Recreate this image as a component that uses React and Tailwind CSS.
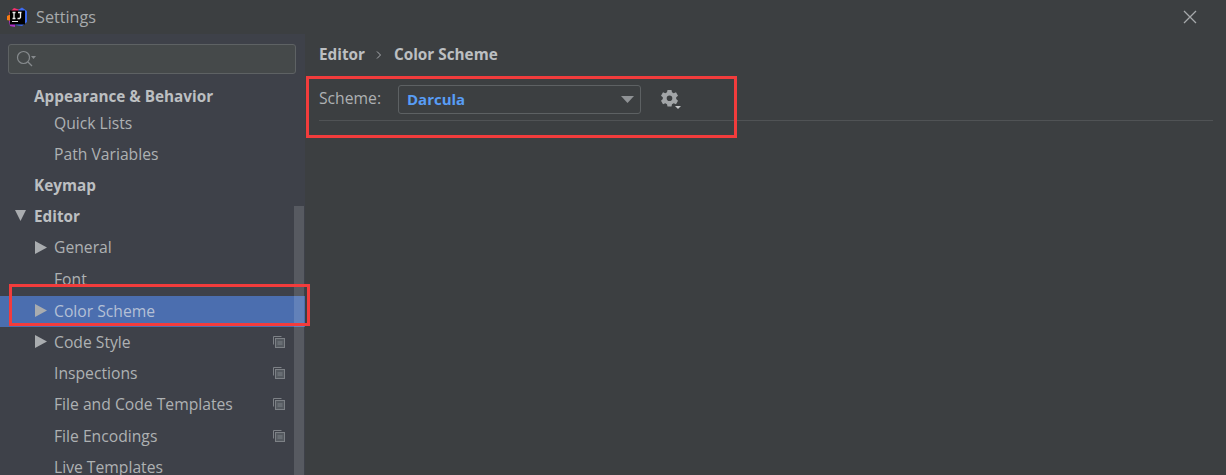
import React from "react";

const font = { fontFamily: '"Open Sans", "Noto Sans", sans-serif' };

function Tri({ down }) {
  return (
    <svg width="12" height="13" viewBox="0 0 12 13" className="shrink-0">
      {down ? <polygon points="0,1 11,1 5.5,12" fill="#a9acaf" /> : <polygon points="0,0 12,6.5 0,13" fill="#a9acaf" />}
    </svg>
  );
}

function Copy() {
  return (
    <svg width="12" height="12" viewBox="0 0 12 12" className="absolute left-[273px] top-[9px]" fill="none" stroke="#7d8186">
      <path d="M8.5 0.5H0.5V8.5" />
      <rect x="2.5" y="2.5" width="9" height="9" fill="#555a60" />
      <path d="M4.5 6H9.5M4.5 8H9.5" />
    </svg>
  );
}

function Row({ label, bold, indent, arrow, copy, selected, h = "h-[31.3px]" }) {
  return (
    <div className={`relative flex items-center ${h} ${selected ? "bg-[#4b6eaf]" : ""}`}>
      {arrow && (
        <span className={`absolute top-[8px] ${indent === "a" ? "left-[15px]" : "left-[35px]"}`}>
          <Tri down={arrow === "down"} />
        </span>
      )}
      <span
        className={`whitespace-nowrap ${indent === "a" ? "pl-[34px]" : "pl-[54px]"} ${bold ? "text-[15.3px] font-bold text-[#bcbfc1]" : "text-[15.7px] text-[#aeb1b3]"} ${selected ? "text-[#b4c0d6]" : ""}`}
      >
        {label}
      </span>
      {copy && <Copy />}
    </div>
  );
}

export default function App() {
  return (
    <div className="relative flex h-[475px] w-[1226px] flex-col overflow-hidden bg-[#3c3f41]" style={font}>
      <header className="flex h-[34px] shrink-0 items-center pl-[7px] pr-[29px]">
        <svg width="20" height="20" viewBox="0 0 20 20" className="shrink-0">
          <path d="M2 6L7 1L13 3L6 10Z" fill="#f5326e" />
          <path d="M0 9L4 7L4 14L0 13Z" fill="#f97a12" />
          <path d="M11 3L15 0.5L20 4V15L15 19L8 18L14 8Z" fill="#3d6bf0" />
          <path d="M2 14L8 12L8 20L3 19Z" fill="#b130c8" />
          <rect x="3" y="3.5" width="15" height="14" fill="#000" />
          <rect x="5" y="14" width="6" height="1" fill="#ddd" />
          <path d="M5.5 5.5H8.5M7 5.5V11.5M5.5 11.5H8.5M11 5.5H14.5M13.5 5.5V10.5L12.5 11.5H10.5" stroke="#eee" strokeWidth="1.3" fill="none" />
        </svg>
        <span className="ml-[9px] text-[16.2px] text-[#a7aaac]">Settings</span>
        <svg width="14" height="14" viewBox="0 0 14 14" className="ml-auto" stroke="#a6a9ab" strokeWidth="1.3">
          <path d="M1 1L13 13M13 1L1 13" />
        </svg>
      </header>

      <div className="flex min-h-0 flex-1">
        <aside className="relative w-[305px] shrink-0 overflow-hidden bg-[#3e4149]">
          <div className="mx-[8px] mt-[10px] flex h-[30px] w-[288px] items-center rounded-[3px] border border-[#5e6264] bg-[#45494a] pl-[7px]">
            <svg width="20" height="18" viewBox="0 0 20 18" fill="none" stroke="#868a8d" strokeWidth="1.2">
              <circle cx="7.5" cy="7.5" r="6" />
              <path d="M12 12L16 16" />
              <polygon points="15,6 20,6 17.5,9" fill="#868a8d" stroke="none" />
            </svg>
          </div>
          <div className="mt-[10px]">
            <Row label="Appearance & Behavior" bold indent="a" h="h-[25px]" />
            <Row label="Quick Lists" h="h-[30px]" />
            <Row label="Path Variables" h="h-[31px]" />
            <Row label="Keymap" bold indent="a" />
            <Row label="Editor" bold indent="a" arrow="down" />
            <Row label="General" arrow="right" />
            <Row label="Font" h="h-[32px]" />
            <Row label="Color Scheme" arrow="right" selected h="h-[31px]" />
            <Row label="Code Style" arrow="right" copy />
            <Row label="Inspections" copy />
            <Row label="File and Code Templates" copy />
            <Row label="File Encodings" copy h="h-[31px]" />
            <Row label="Live Templates" />
          </div>
          <div className="absolute right-[1px] top-[172px] bottom-0 w-[10px] bg-[#ffffff]/[0.13]" />
        </aside>

        <main className="min-w-0 flex-1 pl-[14px] pr-[13px]">
          <div className="flex h-[41px] items-center text-[15.3px] font-bold text-[#bcbfc1]">
            <span>Editor</span>
            <svg width="6" height="8" viewBox="0 0 6 8" className="ml-[11px] mr-[12px]" fill="none" stroke="#a9acaf">
              <path d="M1 0.5L4.5 4L1 7.5" />
            </svg>
            <span>Color Scheme</span>
          </div>
          <div className="flex h-[46px] items-center border-b border-[#505355] pt-[3px]">
            <span className="w-[79px] text-[15.7px] text-[#aeb1b3]">Scheme:</span>
            <div className="flex h-[29px] w-[243px] items-center justify-between rounded-[3px] border border-[#5d6163] bg-[#3c3f41] pl-[8px] pr-[6px]">
              <span className="text-[15px] font-bold text-[#589df6]">Darcula</span>
              <svg width="13" height="7" viewBox="0 0 13 7"><polygon points="0,0 13,0 6.5,7" fill="#8f9295" /></svg>
            </div>
            <svg width="22" height="22" viewBox="0 0 22 22" className="ml-[19px]">
              <path
                fill="#a2a5a7"
                fillRule="evenodd"
                d="M7.5 2H11.5L12 4.3L13.7 5.2L16 4.3L18 7.8L16.2 9.3V11.1L18 12.7L16 16.2L13.7 15.3L12 16.2L11.5 18.5H7.5L7 16.2L5.3 15.3L3 16.2L1 12.7L2.8 11.1V9.3L1 7.8L3 4.3L5.3 5.2L7 4.3ZM9.5 7.5A2.8 2.8 0 1 0 9.5 13.1A2.8 2.8 0 1 0 9.5 7.5Z"
              />
              <polygon points="15,18 21,18 18,21" fill="#c4c6c8" />
            </svg>
          </div>
        </main>
      </div>

      <div className="pointer-events-none absolute left-[306px] top-[76px] h-[62px] w-[431px] border-[3px] border-[#f23c3c]" />
      <div className="pointer-events-none absolute left-[9px] top-[284px] h-[42px] w-[301px] border-[3px] border-[#f23c3c]" />
    </div>
  );
}
